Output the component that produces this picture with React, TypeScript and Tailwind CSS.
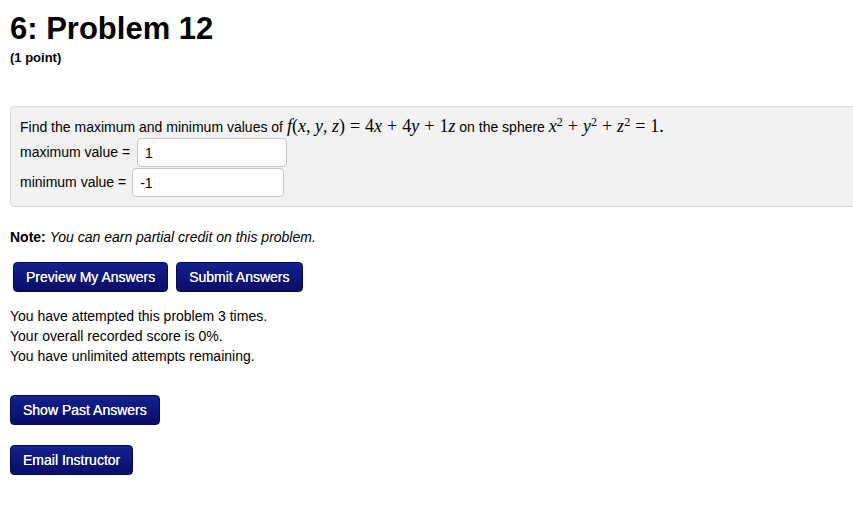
import type { ReactNode } from 'react';

const sans = 'font-["Helvetica","Liberation_Sans",Arial,sans-serif]';
const serif = 'font-["Liberation_Serif","Times_New_Roman",serif]';

function M({ children }: { children: ReactNode }) {
  return <span className={`${serif} text-[18px] leading-[14px] italic`}>{children}</span>;
}

function N({ children }: { children: ReactNode }) {
  return <span className={`${serif} text-[18px] leading-[14px] not-italic`}>{children}</span>;
}

// binary operator / relation with MathJax-like spacing
function Op({ children }: { children: ReactNode }) {
  return <span className={`${serif} mx-[5px] text-[18px] leading-[14px] not-italic`}>{children}</span>;
}

function Sq() {
  return <sup className={`${serif} text-[12px] leading-[10px]`}>2</sup>;
}

function Btn({ children }: { children: ReactNode }) {
  return (
    <button
      type="button"
      className="h-[30px] rounded-[4px] border border-[#060a55] bg-gradient-to-b from-[#13228f] to-[#0a0c68] px-[12px] text-[14px] font-normal text-white [text-shadow:0_0_0.4px_#fff]"
    >
      {children}
    </button>
  );
}

export default function App() {
  return (
    <div className={`${sans} min-h-[506px] w-[853px] bg-white pl-[10px] text-[14px] text-black`}>
      <h1 className="pt-[12px] text-[31px] leading-[34px] font-bold">6: Problem 12</h1>
      <p className="mt-[4px] text-[13px] leading-[15px] font-bold">(1 point)</p>

      <section className="mt-[41px] flex h-[101px] flex-col rounded-l-[4px] border border-r-0 border-[#dcdcdc] bg-[#f2f2f2] pt-[10px] pl-[9px]">
        <p className="h-[21px] leading-[21px]">
          Find the maximum and minimum values of <M>f</M>
          <N>(</N>
          <M>x</M>
          <N>,&nbsp;</N>
          <M>y</M>
          <N>,&nbsp;</N>
          <M>z</M>
          <N>)</N>
          <Op>=</Op>
          <N>4</N>
          <M>x</M>
          <Op>+</Op>
          <N>4</N>
          <M>y</M>
          <Op>+</Op>
          <N>1</N>
          <M>z</M> on the sphere <M>x</M>
          <Sq />
          <Op>+</Op>
          <M>y</M>
          <Sq />
          <Op>+</Op>
          <M>z</M>
          <Sq />
          <Op>=</Op>
          <N>1.</N>
        </p>
        <div className="flex items-center gap-[7px]">
          <span>maximum value =</span>
          <input
            readOnly
            value="1"
            className="h-[29px] w-[150px] rounded-[4px] border border-[#c8c8c8] bg-white px-[7px] text-[14px] outline-none"
          />
        </div>
        <div className="mt-[1px] flex items-center gap-[6px]">
          <span>minimum value =</span>
          <input
            readOnly
            value="-1"
            className="h-[29px] w-[152px] rounded-[4px] border border-[#c8c8c8] bg-white px-[7px] text-[14px] outline-none"
          />
        </div>
      </section>

      <p className="mt-[22px] leading-[17px]">
        <b>Note:</b> <i>You can earn partial credit on this problem.</i>
      </p>

      <div className="mt-[16px] flex gap-[8px] pl-[3px]">
        <Btn>Preview My Answers</Btn>
        <Btn>Submit Answers</Btn>
      </div>

      <div className="mt-[14px] leading-[20px]">
        <p>You have attempted this problem 3 times.</p>
        <p>Your overall recorded score is 0%.</p>
        <p>You have unlimited attempts remaining.</p>
      </div>

      <div className="mt-[29px]">
        <Btn>Show Past Answers</Btn>
      </div>
      <div className="mt-[20px]">
        <Btn>Email Instructor</Btn>
      </div>
    </div>
  );
}
